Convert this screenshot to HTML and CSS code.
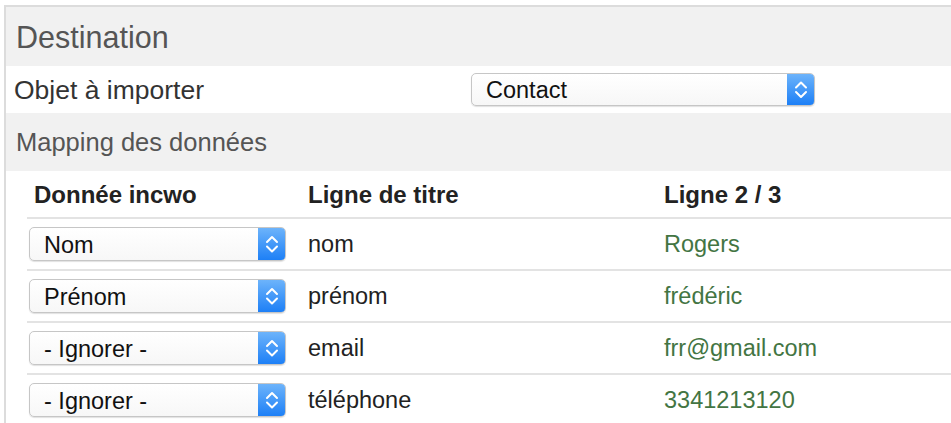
FILE: index.html
```html
<!DOCTYPE html>
<html lang="fr">
<head>
<meta charset="utf-8">
<title>Destination</title>
<link rel="stylesheet" href="styles.css">
</head>
<body>
<div class="panel">
  <div class="section-head title">Destination</div>
  <div class="form-row">
    <div class="form-label">Objet à importer</div>
    <div class="select select-wide">
      <span class="select-text">Contact</span>
      <span class="select-btn"><svg width="28" height="33" viewBox="0 0 28 33"><path d="M9 14.5 L14 9.5 L19 14.5 M9 19 L14 24 L19 19" fill="none" stroke="#fff" stroke-width="2" stroke-linecap="round" stroke-linejoin="round"/></svg></span>
    </div>
  </div>
  <div class="section-head sub">Mapping des données</div>
  <div class="table">
    <div class="tr th">
      <div class="c1">Donnée incwo</div>
      <div class="c2">Ligne de titre</div>
      <div class="c3">Ligne 2 / 3</div>
    </div>
    <div class="tr">
      <div class="c1"><div class="select select-row"><span class="select-text">Nom</span><span class="select-btn"><svg width="28" height="34" viewBox="0 0 28 34"><path d="M9 15 L14 10 L19 15 M9 19.5 L14 24.5 L19 19.5" fill="none" stroke="#fff" stroke-width="2" stroke-linecap="round" stroke-linejoin="round"/></svg></span></div></div>
      <div class="c2">nom</div>
      <div class="c3 val">Rogers</div>
    </div>
    <div class="tr">
      <div class="c1"><div class="select select-row"><span class="select-text">Prénom</span><span class="select-btn"><svg width="28" height="34" viewBox="0 0 28 34"><path d="M9 15 L14 10 L19 15 M9 19.5 L14 24.5 L19 19.5" fill="none" stroke="#fff" stroke-width="2" stroke-linecap="round" stroke-linejoin="round"/></svg></span></div></div>
      <div class="c2">prénom</div>
      <div class="c3 val">frédéric</div>
    </div>
    <div class="tr">
      <div class="c1"><div class="select select-row"><span class="select-text">- Ignorer -</span><span class="select-btn"><svg width="28" height="34" viewBox="0 0 28 34"><path d="M9 15 L14 10 L19 15 M9 19.5 L14 24.5 L19 19.5" fill="none" stroke="#fff" stroke-width="2" stroke-linecap="round" stroke-linejoin="round"/></svg></span></div></div>
      <div class="c2">email</div>
      <div class="c3 val">frr@gmail.com</div>
    </div>
    <div class="tr">
      <div class="c1"><div class="select select-row"><span class="select-text">- Ignorer -</span><span class="select-btn"><svg width="28" height="34" viewBox="0 0 28 34"><path d="M9 15 L14 10 L19 15 M9 19.5 L14 24.5 L19 19.5" fill="none" stroke="#fff" stroke-width="2" stroke-linecap="round" stroke-linejoin="round"/></svg></span></div></div>
      <div class="c2">téléphone</div>
      <div class="c3 val">3341213120</div>
    </div>
  </div>
</div>
</body>
</html>
```

FILE: styles.css
```css
* { box-sizing: border-box; }
html, body { margin: 0; padding: 0; background: #fff; }
body {
  font-family: "Liberation Sans", Arial, sans-serif;
  color: #222;
  overflow: hidden;
}
.panel {
  margin: 5px 0 0 4px;
  border-top: 2px solid #dcdcdc;
  border-left: 2px solid #dcdcdc;
  height: 430px;
}
.section-head {
  background: #f1f1f1;
  color: #555;
  display: flex;
  align-items: center;
}
.title {
  height: 59px;
  font-size: 30.5px;
  padding-left: 10px;
  padding-top: 1px;
}
.sub {
  height: 58px;
  font-size: 25.5px;
  padding-left: 10px;
  padding-top: 1px;
}
.form-row {
  height: 47px;
  display: flex;
  align-items: center;
}
.form-label {
  width: 465px;
  padding-left: 8px;
  padding-top: 1px;
  font-size: 26.5px;
  color: #333;
}
.select {
  display: flex;
  align-items: stretch;
  background: linear-gradient(#ffffff, #f7f7f7);
  border: 1px solid #c6c6c6;
  border-radius: 5px;
  box-shadow: 0 1px 1px rgba(0,0,0,0.12);
  overflow: hidden;
  color: #111;
}
.select-wide { width: 344px; height: 33px; font-size: 23.5px; }
.select-row { width: 257px; height: 34px; font-size: 23.5px; }
.select-text {
  flex: 1;
  display: flex;
  align-items: center;
  padding-left: 14px;
  padding-top: 2px;
}
.select-btn {
  width: 28px;
  background: linear-gradient(#6fb5fb, #1b7ef6);
  display: flex;
  align-items: center;
  justify-content: center;
  margin: -1px -1px -1px 0;
}
.table {
  margin-left: 21px;
}
.tr {
  display: grid;
  grid-template-columns: 273px 356px 1fr;
  height: 52px;
  border-top: 2px solid #e3e3e3;
  align-items: center;
  font-size: 23.5px;
  color: #222;
}
.tr.th {
  border-top: none;
  height: 46px;
  font-weight: bold;
  font-size: 24px;
  padding-top: 2px;
}
.tr .c1 { padding-left: 2px; }
.tr.th .c1 { padding-left: 7px; }
.c2 { padding-left: 8px; }
.c3 { padding-left: 8px; }
.val { color: #437543; }
```
